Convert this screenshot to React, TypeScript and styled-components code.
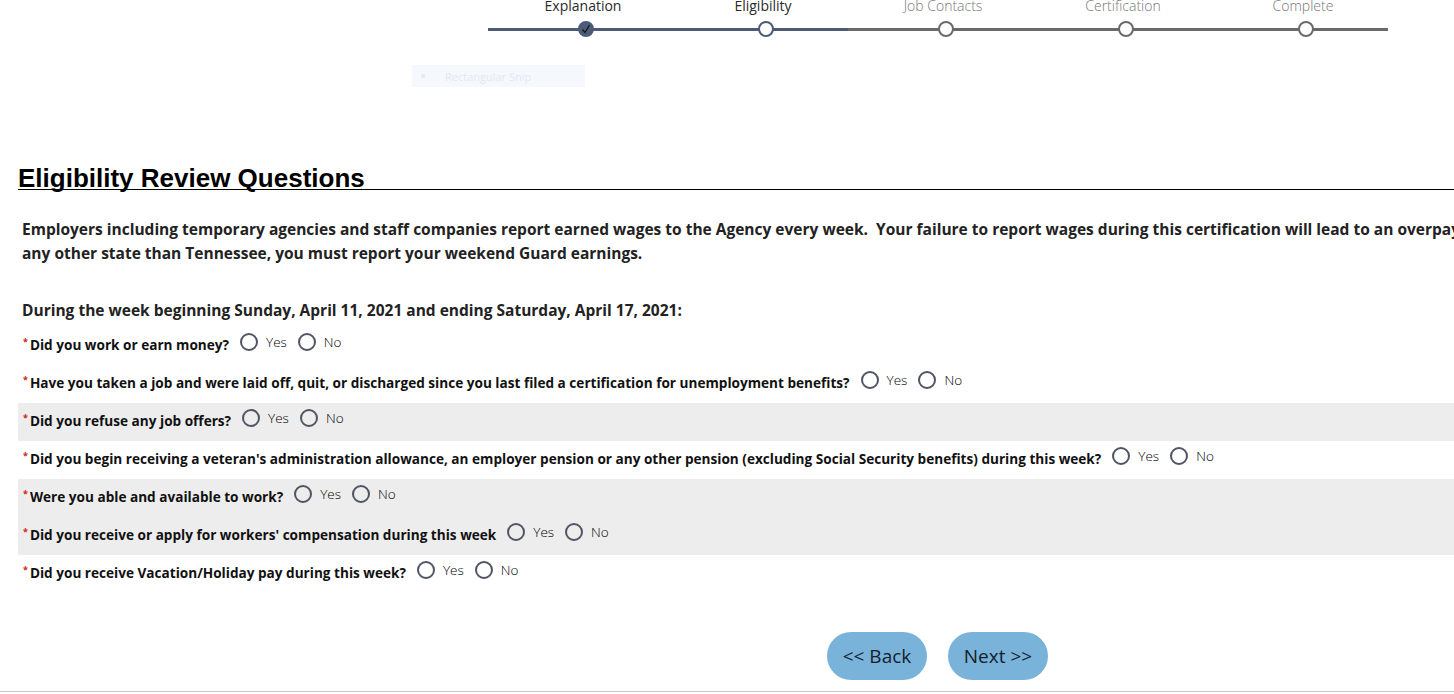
import styled, { createGlobalStyle } from "styled-components";

const Global = createGlobalStyle`
  html, body {
    margin: 0;
    padding: 0;
    background: #fff;
    overflow: hidden;
  }
  body {
    font-family: "Open Sans", "Noto Sans", Arial, sans-serif;
    color: #1e1e1e;
  }
`;

const Page = styled.div`
  position: relative;
  width: 1454px;
  height: 694px;
  overflow: hidden;
`;

const Stepper = styled.div`
  display: flex;
  margin-left: 488px;
  width: 900px;
`;

const Step = styled.div<{ $done: boolean }>`
  position: relative;
  width: 180px;
  height: 38px;
  &::after {
    content: "";
    position: absolute;
    left: 0;
    right: 0;
    top: 28px;
    height: 3px;
    background: ${(p) => (p.$done ? "#4b5b78" : "#6a6a6a")};
  }
`;

const StepLabel = styled.div<{ $active: boolean }>`
  position: absolute;
  left: 95px;
  top: -4px;
  transform: translateX(-50%);
  white-space: nowrap;
  font-size: 14px;
  font-weight: ${(p) => (p.$active ? 400 : 300)};
  color: ${(p) => (p.$active ? "#2a2a2a" : "#777")};
`;

const Dot = styled.div<{ $filled: boolean; $color: string }>`
  position: absolute;
  left: 90px;
  top: 21px;
  width: 12px;
  height: 12px;
  border-radius: 50%;
  border: 2px solid ${(p) => p.$color};
  background: ${(p) => (p.$filled ? p.$color : "#fff")};
  z-index: 1;
  display: flex;
  align-items: center;
  justify-content: center;
`;

const Snip = styled.div`
  position: absolute;
  left: 412px;
  top: 65px;
  width: 173px;
  height: 22px;
  background: #f5f9fe;
  display: flex;
  align-items: center;
  gap: 20px;
  padding-left: 9px;
  box-sizing: border-box;
  font-size: 11px;
  color: #e3e8ee;
`;

const SnipDot = styled.span`
  width: 4px;
  height: 4px;
  border-radius: 50%;
  background: #e3e8ee;
`;

const Heading = styled.h2`
  margin: 129px 0 0 18px;
  font-family: "Liberation Sans", Arial, sans-serif;
  font-weight: 700;
  font-size: 26px;
  line-height: 22px;
  color: #000;
  border-bottom: 1px solid #000;
`;

const Intro = styled.p`
  margin: 27px 0 0 22px;
  font-size: 15.5px;
  font-weight: 700;
  line-height: 24px;
  white-space: nowrap;
  color: #222;
`;

const WeekLine = styled.p`
  margin: 33px 0 0 22px;
  font-size: 15.5px;
  font-weight: 700;
  line-height: 24px;
  color: #222;
`;

const Questions = styled.div`
  margin: 5px 0 0 18px;
`;

const Row = styled.div<{ $shade: boolean }>`
  display: flex;
  align-items: center;
  height: 38px;
  box-sizing: border-box;
  padding: 0 0 8px 5px;
  background: ${(p) => (p.$shade ? "#ededed" : "transparent")};
`;

const Question = styled.span`
  font-size: 13.6px;
  font-weight: 700;
  color: #111;
  white-space: nowrap;
  margin-top: 4px;
`;

const Req = styled.sup`
  color: #d02020;
  font-size: 9px;
  margin-right: 2px;
  vertical-align: 5px;
`;

const Radio = styled.span`
  display: inline-block;
  width: 14px;
  height: 14px;
  border-radius: 50%;
  border: 2px solid #4f5563;
  margin: 0 8px 0 11px;
  flex: none;
`;

const Choice = styled.span`
  font-size: 13.5px;
  font-weight: 300;
  color: #000;
`;

const Buttons = styled.div`
  display: flex;
  gap: 21px;
  margin: 39px 0 0 827px;
`;

const NavButton = styled.button`
  width: 100px;
  height: 48px;
  border: none;
  border-radius: 24px;
  background: #79b3d9;
  font-family: "Open Sans", "Noto Sans", sans-serif;
  font-size: 19px;
  color: #13202e;
  cursor: pointer;
  padding: 0;
`;

const Footer = styled.div`
  position: absolute;
  left: 0;
  right: 0;
  top: 691px;
  height: 1px;
  background: #c8c8c8;
`;

const steps = ["Explanation", "Eligibility", "Job Contacts", "Certification", "Complete"];

const questions: { text: string; shade: boolean }[] = [
  { text: "Did you work or earn money?", shade: false },
  {
    text: "Have you taken a job and were laid off, quit, or discharged since you last filed a certification for unemployment benefits?",
    shade: false,
  },
  { text: "Did you refuse any job offers?", shade: true },
  {
    text: "Did you begin receiving a veteran's administration allowance, an employer pension or any other pension (excluding Social Security benefits) during this week?",
    shade: false,
  },
  { text: "Were you able and available to work?", shade: true },
  { text: "Did you receive or apply for workers' compensation during this week", shade: true },
  { text: "Did you receive Vacation/Holiday pay during this week?", shade: false },
];

export default function App() {
  return (
    <Page>
      <Global />
      <Stepper>
        {steps.map((s, i) => (
          <Step key={s} $done={i < 2}>
            <StepLabel $active={i < 2}>{s}</StepLabel>
            <Dot $filled={i === 0} $color={i < 2 ? "#4b5b78" : "#6a6a6a"}>
              {i === 0 && (
                <svg width="10" height="10" viewBox="0 0 10 10">
                  <path d="M1.5 5.5 L4 8.5 L8.5 1" fill="none" stroke="#111" strokeWidth="1.2" />
                </svg>
              )}
            </Dot>
          </Step>
        ))}
      </Stepper>
      <Snip>
        <SnipDot />
        Rectangular Snip
      </Snip>
      <Heading>Eligibility Review Questions</Heading>
      <Intro>
        Employers including temporary agencies and staff companies report earned wages to the Agency every week.&nbsp; Your failure to report wages during this certification will lead to an overpayment. If you are a member of the National Guard in
        <br />
        any other state than Tennessee, you must report your weekend Guard earnings.
      </Intro>
      <WeekLine>During the week beginning Sunday, April 11, 2021 and ending Saturday, April 17, 2021:</WeekLine>
      <Questions>
        {questions.map((q) => (
          <Row key={q.text} $shade={q.shade}>
            <Question>
              <Req>*</Req>
              {q.text}
            </Question>
            <Radio />
            <Choice>Yes</Choice>
            <Radio />
            <Choice>No</Choice>
          </Row>
        ))}
      </Questions>
      <Buttons>
        <NavButton>&lt;&lt; Back</NavButton>
        <NavButton>Next &gt;&gt;</NavButton>
      </Buttons>
      <Footer />
    </Page>
  );
}
